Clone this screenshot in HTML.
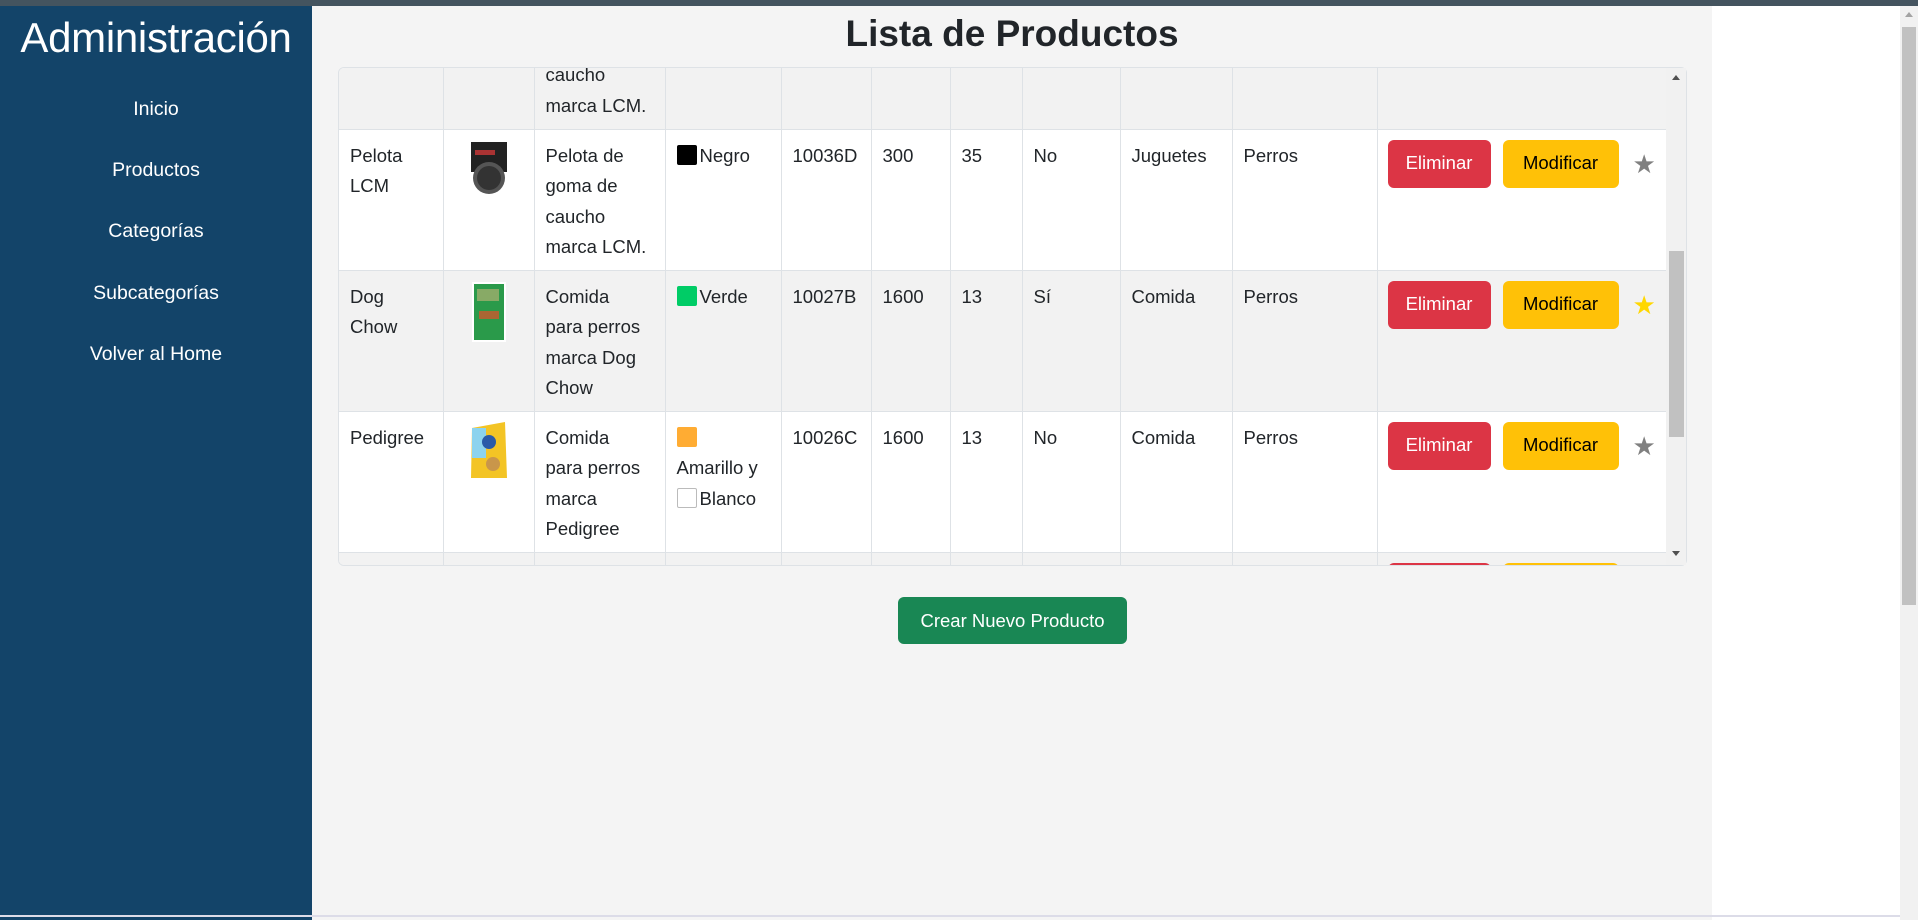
<!DOCTYPE html>
<html><head><meta charset="utf-8">
<style>
*{box-sizing:border-box;margin:0;padding:0}
body{width:1918px;height:920px;overflow:hidden;background:#fff;font-family:"Liberation Sans",sans-serif;position:relative;color:#212529}
.topbar{position:absolute;left:0;top:0;width:1918px;height:6px;background:#44545f}
.side{position:absolute;left:0;top:6px;width:312px;height:914px;background:#134469;color:#fff}
.side h1{position:absolute;left:0;width:312px;top:8px;text-align:center;font-size:42px;font-weight:normal;letter-spacing:-0.3px}
.side a{position:absolute;left:0;width:312px;text-align:center;font-size:19.5px;color:#fff;text-decoration:none}
.main{position:absolute;left:312px;top:6px;width:1400px;height:914px;background:#f4f4f4}
.title{position:absolute;left:312px;width:1400px;top:13px;text-align:center;font-size:37px;font-weight:bold;color:#212529}
.wrap{position:absolute;left:338px;top:67px;width:1349px;height:499px;border:1px solid #dee2e6;border-radius:6px;overflow:hidden;background:#fff}
table{position:absolute;left:0;top:-80px;border-collapse:collapse;table-layout:fixed;width:1328px;font-size:18.5px}
td{border:1px solid #dee2e6;border-top:none;vertical-align:top;padding:11px 11px 0 11px;line-height:30.5px;height:141px;overflow:hidden}
td:first-child{border-left:none}
tr.g td{background:#f2f2f2}
tr.w td{background:#fff}
.sw{display:inline-block;width:20px;height:20px;vertical-align:-3px;margin-right:3px;border-radius:2px}
td.a{padding:10px 0 0 10px}
.act{display:flex;align-items:center;gap:12px;height:48px}
.btn{height:48px;border-radius:6px;display:flex;align-items:center;justify-content:center;font-size:18.5px;line-height:1;flex-shrink:0}
.del{background:#dc3545;color:#fff;width:103px}
.mod{background:#ffc107;color:#000;width:116px}
.star{font-size:26px;color:#808080;margin-left:2px;line-height:1}
.img{display:block;margin:0 auto;margin-top:-1px}
.vs{position:absolute;left:1666px;top:68px;width:20px;height:497px;background:#f1f1f1}
.thumb{position:absolute;left:1669px;top:251px;width:15px;height:186px;background:#c1c1c1}
.create{position:absolute;left:898px;top:597px;width:229px;height:47px;background:#198754;color:#fff;border-radius:6px;font-size:18.5px;display:flex;align-items:center;justify-content:center}
.pscroll{position:absolute;left:1900px;top:6px;width:18px;height:914px;background:#f1f1f1}
.pthumb{position:absolute;left:1902px;top:27px;width:14px;height:578px;background:#c1c1c1}
</style></head><body>
<div class="topbar"></div>
<div class="side">
<h1>Administración</h1>
<a style="top:92px">Inicio</a>
<a style="top:153px">Productos</a>
<a style="top:214px">Categorías</a>
<a style="top:276px">Subcategorías</a>
<a style="top:337px">Volver al Home</a>
</div>
<div class="main"></div>
<div class="title">Lista de Productos</div>
<div class="wrap">
<table>
<colgroup><col style="width:104px"><col style="width:91px"><col style="width:131px"><col style="width:116px"><col style="width:90px"><col style="width:79px"><col style="width:72px"><col style="width:98px"><col style="width:112px"><col style="width:145px"><col style="width:290px"></colgroup>
<tr class="g"><td></td><td></td><td>Pelota de goma de caucho marca LCM.</td><td></td><td></td><td></td><td></td><td></td><td></td><td></td><td></td></tr>
<tr class="w"><td>Pelota LCM</td><td><svg class="img" width="38" height="60" viewBox="0 0 38 60"><rect x="1" y="2" width="36" height="30" fill="#222"/><rect x="5" y="10" width="20" height="5" fill="#a33"/><circle cx="19" cy="38" r="16" fill="#555"/><circle cx="19" cy="38" r="12" fill="#333"/></svg></td><td>Pelota de goma de caucho marca LCM.</td><td><span class="sw" style="background:#000"></span>Negro</td><td>10036D</td><td>300</td><td>35</td><td>No</td><td>Juguetes</td><td>Perros</td><td class="a"><div class="act"><div class="btn del">Eliminar</div><div class="btn mod">Modificar</div><span class="star">★</span></div></td></tr>
<tr class="g"><td>Dog<br>Chow</td><td><svg class="img" width="36" height="62" viewBox="0 0 36 62"><rect x="1" y="1" width="34" height="60" fill="#fff"/><rect x="3" y="3" width="30" height="56" fill="#2a9a4a"/><rect x="6" y="8" width="22" height="12" fill="#8a6"/><rect x="8" y="30" width="20" height="8" fill="#a63"/></svg></td><td>Comida<br>para perros<br>marca Dog<br>Chow</td><td><span class="sw" style="background:#00cc66"></span>Verde</td><td>10027B</td><td>1600</td><td>13</td><td>Sí</td><td>Comida</td><td>Perros</td><td class="a"><div class="act"><div class="btn del">Eliminar</div><div class="btn mod">Modificar</div><span class="star" style="color:#ffd700">★</span></div></td></tr>
<tr class="w"><td>Pedigree</td><td><svg class="img" width="40" height="60" viewBox="0 0 40 60"><path d="M3 6 L36 0 L38 56 L2 56 Z" fill="#f3c425"/><rect x="3" y="6" width="14" height="30" fill="#8cd3ee"/><circle cx="20" cy="20" r="7" fill="#2a5aa8"/><circle cx="24" cy="42" r="7" fill="#c9964a"/></svg></td><td>Comida<br>para perros<br>marca<br>Pedigree</td><td><span class="sw" style="background:#ffac33"></span><br>Amarillo y <span class="sw" style="background:#fff;border:1px solid #bbb"></span>Blanco</td><td>10026C</td><td>1600</td><td>13</td><td>No</td><td>Comida</td><td>Perros</td><td class="a"><div class="act"><div class="btn del">Eliminar</div><div class="btn mod">Modificar</div><span class="star">★</span></div></td></tr>
<tr class="g"><td></td><td></td><td></td><td></td><td></td><td></td><td></td><td></td><td></td><td></td><td class="a"><div class="act"><div class="btn del">Eliminar</div><div class="btn mod">Modificar</div><span class="star">★</span></div></td></tr>
</table>
</div>
<div class="vs"></div>
<div class="thumb"></div>
<div style="position:absolute;left:1672px;top:75px;width:0;height:0;border-left:4px solid transparent;border-right:4px solid transparent;border-bottom:5px solid #505050"></div>
<div style="position:absolute;left:1672px;top:551px;width:0;height:0;border-left:4px solid transparent;border-right:4px solid transparent;border-top:5px solid #505050"></div>
<div class="create">Crear Nuevo Producto</div>
<div class="pscroll"></div>
<div class="pthumb"></div>
<div style="position:absolute;left:1905px;top:12px;width:0;height:0;border-left:4px solid transparent;border-right:4px solid transparent;border-bottom:5px solid #a3a3a3"></div>
<div style="position:absolute;left:0;top:915px;width:1900px;height:2px;background:#dcdce8"></div>
</body></html>
